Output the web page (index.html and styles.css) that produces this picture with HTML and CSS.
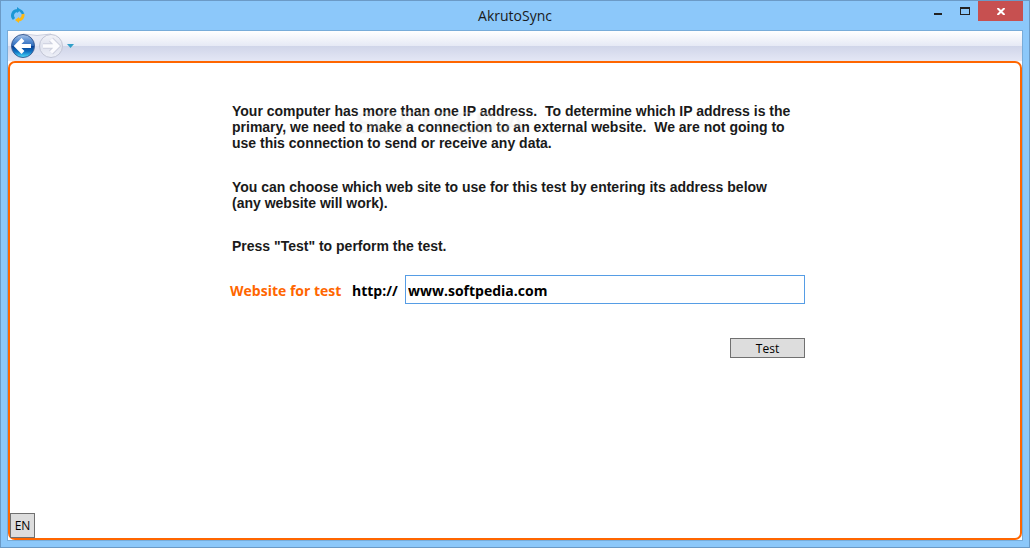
FILE: index.html
```
<!DOCTYPE html>
<html lang="en">
  <head>
    <meta charset="UTF-8" />
    <meta name="viewport" content="width=device-width, initial-scale=1.0" />
    <title>AkrutoSync</title>
    <link rel="stylesheet" href="styles.css">
  </head>
  <body>
    <div class="window">
      <header class="titlebar">
        <svg class="logo" width="14" height="16" viewBox="0 0 14 16" fill="none" stroke-width="3">
          <path d="M3 12A5 5 0 0 1 6 3.500" stroke="#1b97d5" />
          <path d="M6 0l4 3-4 3z" fill="#1b97d5" />
          <path d="M9 3.500A5 5 0 0 1 12 7" stroke="#1b97d5" stroke-width="2.500" />
          <path d="M12 7A5 5 0 0 1 7 13" stroke="#fdb813" />
          <path d="M8 10l-4 3 4 3z" fill="#fdb813" />
        </svg>
        <h1>AkrutoSync</h1>
        <div class="controls">
          <button class="min" aria-label="Minimize">
            <svg width="8" height="2"><path d="M0 0h8v2H0z" fill="#222" /></svg>
          </button>
          <button class="max" aria-label="Maximize">
            <svg width="10" height="8"><path d="M0 0h10v8H0zM1 2v5h8V2z" fill="#222" fill-rule="evenodd" /></svg>
          </button>
          <button class="close" aria-label="Close">
            <svg width="8" height="7" viewBox="0 0 8 7"><path d="M0.500 0l7 7M7.500 0l-7 7" stroke="#fff" stroke-width="2" /></svg>
          </button>
        </div>
      </header>
      <div class="client">
        <nav class="toolbar">
          <svg width="68" height="28" viewBox="0 0 68 28">
            <defs>
              <linearGradient id="blue" x1="0" y1="0" x2="0" y2="1">
                <stop offset="0" stop-color="#a9c4e8" />
                <stop offset="0.250" stop-color="#5f92d4" />
                <stop offset="0.480" stop-color="#2f6cbc" />
                <stop offset="0.520" stop-color="#083f94" />
                <stop offset="0.750" stop-color="#0f74c4" />
                <stop offset="1" stop-color="#4fe4ff" />
              </linearGradient>
              <linearGradient id="gray" x1="0" y1="0" x2="0" y2="1">
                <stop offset="0" stop-color="#f3f4f9" />
                <stop offset="0.500" stop-color="#dfe2ee" />
                <stop offset="1" stop-color="#eef0f8" />
              </linearGradient>
            </defs>
            <path d="M14 2Q28 6 42 2V25Q28 21 14 25z" fill="#e2e5f1" opacity="0.600" />
            <path d="M14 2Q28 5 42 2" fill="none" stroke="#c9cddd" />
            <circle cx="14" cy="14" r="11.500" fill="url(#blue)" stroke="#3d5f96" />
            <path d="M22 14H8M14 7.500L7.500 14l6.500 6.500" fill="none" stroke="#fff" stroke-width="4" />
            <circle cx="42" cy="14" r="11.500" fill="url(#gray)" stroke="#c1c5d5" />
            <path d="M34 14h14M42 7.500l6.500 6.500-6.500 6.500" fill="none" stroke="#cdd0de" stroke-width="5.500" />
            <path d="M34 14h14M42 7.500l6.500 6.500-6.500 6.500" fill="none" stroke="#fbfbfe" stroke-width="3.500" />
            <path d="M58 12h7l-3.500 4z" fill="#2f9fc8" />
          </svg>
        </nav>
        <main class="panel">
          <form class="content" onsubmit="return false">
            <div class="intro">
              <p>
                Your computer has more than one IP address.&nbsp; To determine which IP address is the<br>
                primary, we need to make a connection to an external website.&nbsp; We are not going to<br>
                use this connection to send or receive any data.
              </p>
              <span class="watermark">SOFTPEDIA</span>
            </div>
            <p>
              You can choose which web site to use for this test by entering its address below<br>
              (any website will work).
            </p>
            <p>Press "Test" to perform the test.</p>
            <div class="field">
              <label for="site">Website for test</label>
              <span class="scheme">http://</span>
              <input type="text" id="site" value="www.softpedia.com">
            </div>
            <button class="test">Test</button>
          </form>
          <button class="lang">EN</button>
        </main>
      </div>
    </div>
  </body>
</html>
```

FILE: styles.css
```
* {
  box-sizing: border-box;
  margin: 0;
  padding: 0;
}
body {
  font-family: "Open Sans", "Noto Sans", sans-serif;
  color: #1a1a1a;
}
button,
input {
  font-family: inherit;
}
.window {
  display: flex;
  flex-direction: column;
  min-height: 100vh;
  padding: 0 6px 6px;
  border: 1px solid #6b9ac6;
  background: #8cc8fa;
}
.titlebar {
  display: grid;
  grid-template-columns: 1fr auto 1fr;
  height: 29px;
}
.logo {
  margin: 6px 0 0 4px;
}
.titlebar h1 {
  font-size: 14px;
  font-weight: 400;
  line-height: 30px;
}
.controls {
  display: flex;
  justify-content: flex-end;
  align-items: flex-start;
}
.controls button {
  display: flex;
  justify-content: center;
  width: 27px;
  height: 20px;
  border: 0;
  background: none;
}
.controls .min {
  padding-top: 12px;
}
.controls .max {
  padding-top: 6px;
}
.controls .close {
  width: 45px;
  padding-top: 7px;
  background: #c75050;
}
.client {
  display: flex;
  flex-direction: column;
  flex: 1;
  border: 1px solid #78acd9;
  background: #fff;
}
.toolbar {
  height: 30px;
  padding: 1px;
  background: linear-gradient(#fff, #e6e9f5 50%, #d0d5e9 50%, #e4e7f5);
}
.toolbar svg {
  display: block;
}
.panel {
  display: flex;
  flex-direction: column;
  flex: 1;
  border: 2px solid #ff6600;
  border-radius: 7px;
  background: #fff;
}
.content {
  display: flex;
  flex-direction: column;
  gap: 27px;
  width: 580px;
  max-width: 100%;
  margin: 0 auto;
  padding: 40px 0 0 5px;
}
.content p {
  padding-left: 2px;
  font: bold 14px/16px "Liberation Sans", Arial, sans-serif;
}
.intro {
  position: relative;
  padding-bottom: 1px;
}
.watermark {
  position: absolute;
  top: 4px;
  left: 124px;
  font: 30px/30px "Liberation Sans", Arial, sans-serif;
  color: rgba(255, 255, 255, 0.25);
  text-shadow: 1px 1px 2px rgba(0, 0, 0, 0.06);
  pointer-events: none;
}
.field {
  display: flex;
  align-items: center;
  margin-top: -6px;
  font-size: 14px;
  font-weight: 700;
  color: #000;
}
.field label {
  width: 122px;
  padding-top: 2px;
  color: #ff6600;
}
.scheme {
  width: 53px;
  padding-top: 2px;
}
.field input {
  flex: 1;
  min-width: 0;
  height: 29px;
  padding: 2px 2px 0;
  border: 1px solid #569de5;
  outline: 0;
  font-size: 14px;
  font-weight: 700;
  color: #000;
}
.test,
.lang {
  border: 1px solid #707070;
  background: #ddd;
  font-size: 12px;
  color: #000;
}
.test {
  align-self: flex-end;
  width: 75px;
  height: 20px;
  margin-top: 7px;
  padding-top: 1px;
  line-height: 18px;
}
.lang {
  align-self: flex-start;
  width: 25px;
  height: 25px;
  margin-top: auto;
}
```
